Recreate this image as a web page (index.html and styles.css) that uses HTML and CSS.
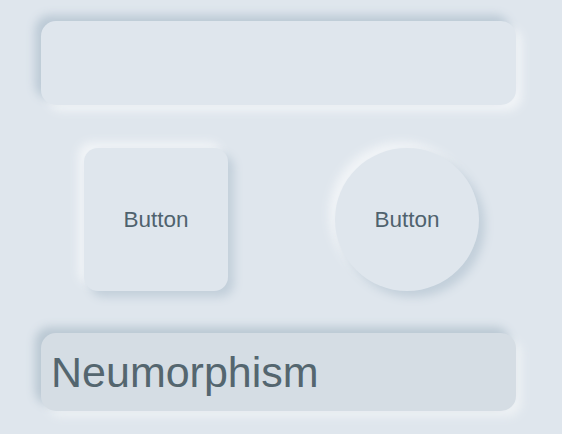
FILE: index.html
```html
<!DOCTYPE html>
<html>
<head>
<meta charset="utf-8">
<link rel="stylesheet" href="styles.css">
</head>
<body>
<div class="page">
  <div class="well"></div>
  <div class="row">
    <div class="btn square">Button</div>
    <div class="btn circle">Button</div>
  </div>
  <div class="field">Neumorphism</div>
</div>
</body>
</html>
```
FILE: styles.css
```css
html, body {
  margin: 0;
  padding: 0;
  background: #dfe6ed;
  font-family: "Liberation Sans", Arial, sans-serif;
}
.page {
  width: 562px;
  height: 434px;
  box-sizing: border-box;
  padding: 21px 46px 0 41px;
  display: flex;
  flex-direction: column;
}
.well {
  height: 84px;
  border-radius: 15px;
  background: #dfe6ed;
  box-shadow: -6px -6px 10px #bccad6, 6px 6px 10px #f1f4f7;
}
.row {
  display: flex;
  justify-content: space-between;
  padding: 43px 37px 0 43px;
}
.btn {
  width: 144px;
  height: 143px;
  display: flex;
  align-items: center;
  justify-content: center;
  font-size: 22.5px;
  color: #4f626e;
  background: #dfe6ed;
  box-shadow: 6px 6px 10px #c2cfda, -6px -6px 10px #f1f4f7;
}
.square {
  border-radius: 14px;
}
.circle {
  border-radius: 50%;
}
.field {
  margin-top: 42px;
  height: 78px;
  border-radius: 15px;
  background: #d5dde4;
  box-shadow: -6px -6px 10px #bac8d3, 6px 6px 10px #edf1f4;
  font-size: 43px;
  color: #54666f;
  padding-left: 10px;
  display: flex;
  align-items: center;
}
```
